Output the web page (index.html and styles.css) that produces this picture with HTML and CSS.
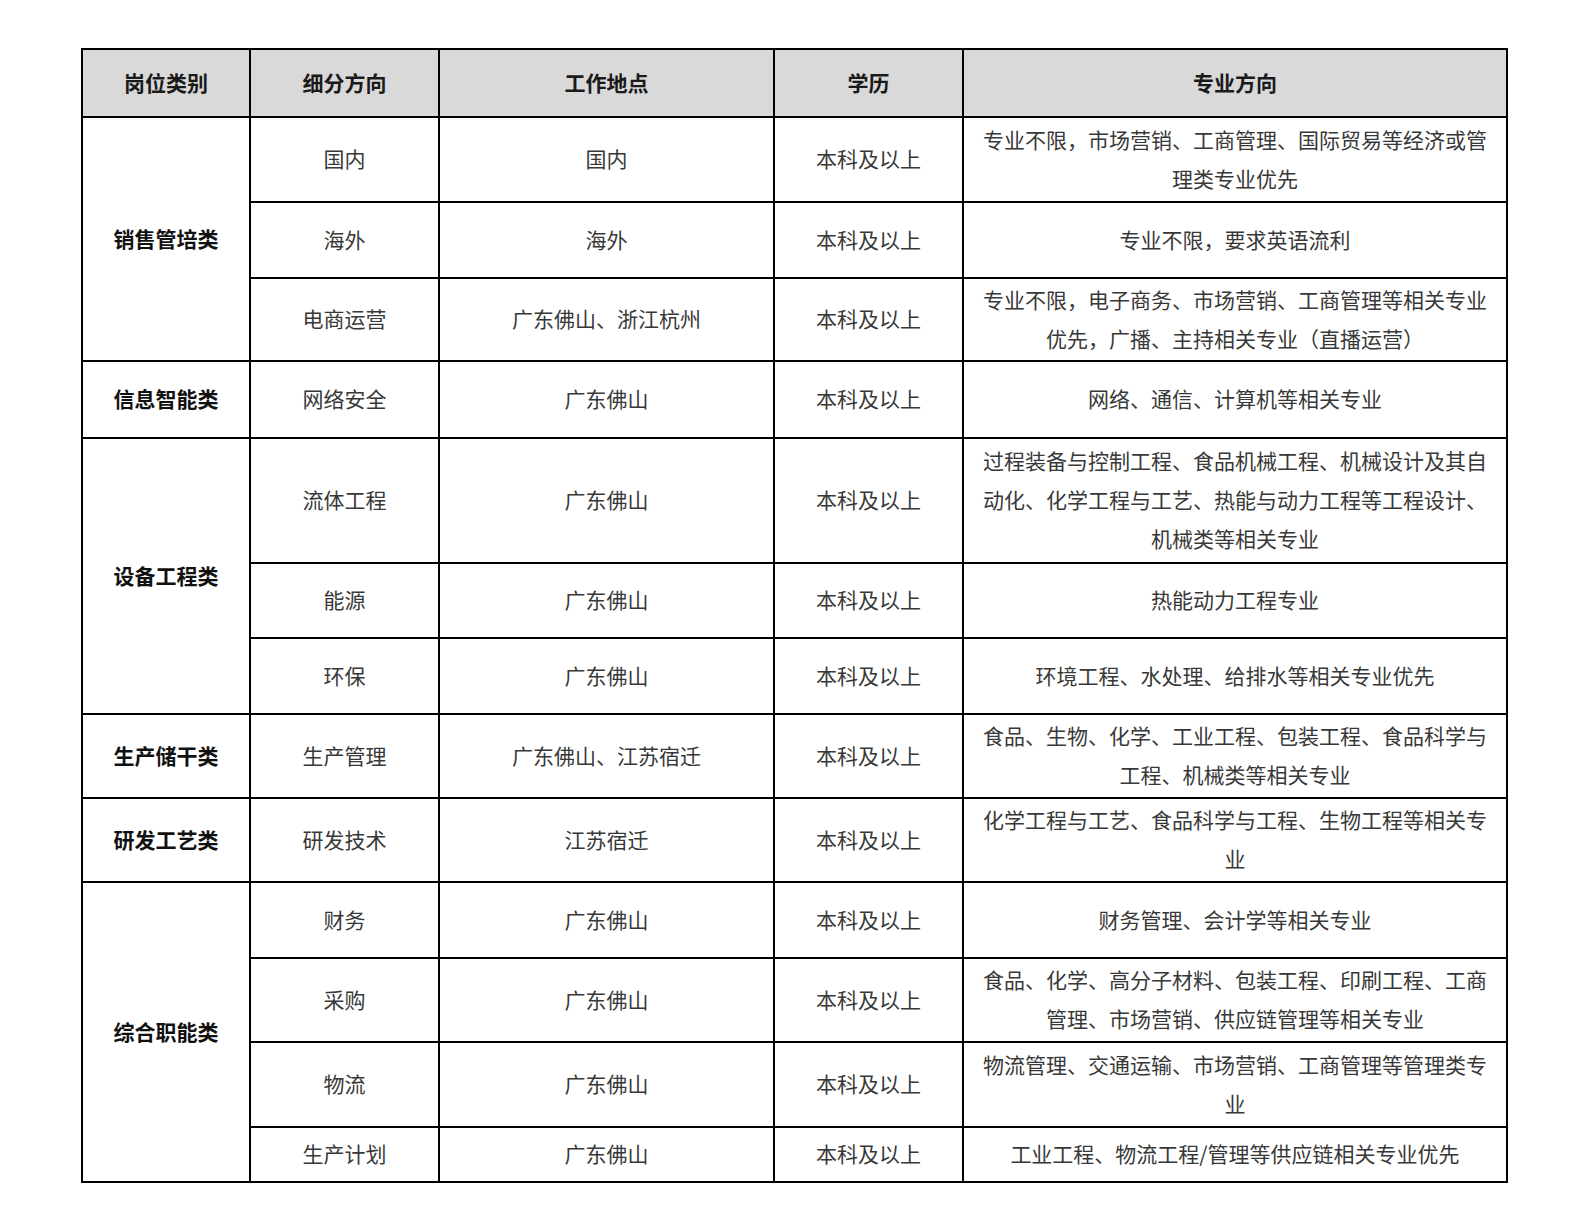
FILE: index.html
```html
<!DOCTYPE html>
<html lang="zh-CN">
<head>
<meta charset="utf-8">
<title>岗位需求</title>
<link rel="stylesheet" href="styles.css">
</head>
<body>
<table class="jobs">
  <colgroup>
    <col class="c1"><col class="c2"><col class="c3"><col class="c4"><col class="c5">
  </colgroup>
  <thead>
    <tr class="h68">
      <th>岗位类别</th><th>细分方向</th><th>工作地点</th><th>学历</th><th>专业方向</th>
    </tr>
  </thead>
  <tbody>
    <tr class="h85">
      <td class="cat" rowspan="3">销售管培类</td>
      <td>国内</td><td>国内</td><td>本科及以上</td>
      <td>专业不限，市场营销、工商管理、国际贸易等经济或管<br>理类专业优先</td>
    </tr>
    <tr class="h76">
      <td>海外</td><td>海外</td><td>本科及以上</td>
      <td>专业不限，要求英语流利</td>
    </tr>
    <tr class="h83">
      <td>电商运营</td><td>广东佛山、浙江杭州</td><td>本科及以上</td>
      <td>专业不限，电子商务、市场营销、工商管理等相关专业<br>优先，广播、主持相关专业（直播运营）</td>
    </tr>
    <tr class="h77">
      <td class="cat">信息智能类</td>
      <td>网络安全</td><td>广东佛山</td><td>本科及以上</td>
      <td>网络、通信、计算机等相关专业</td>
    </tr>
    <tr class="h125">
      <td class="cat" rowspan="3">设备工程类</td>
      <td>流体工程</td><td>广东佛山</td><td>本科及以上</td>
      <td>过程装备与控制工程、食品机械工程、机械设计及其自<br>动化、化学工程与工艺、热能与动力工程等工程设计、<br>机械类等相关专业</td>
    </tr>
    <tr class="h75">
      <td>能源</td><td>广东佛山</td><td>本科及以上</td>
      <td>热能动力工程专业</td>
    </tr>
    <tr class="h76">
      <td>环保</td><td>广东佛山</td><td>本科及以上</td>
      <td>环境工程、水处理、给排水等相关专业优先</td>
    </tr>
    <tr class="h84">
      <td class="cat">生产储干类</td>
      <td>生产管理</td><td>广东佛山、江苏宿迁</td><td>本科及以上</td>
      <td>食品、生物、化学、工业工程、包装工程、食品科学与<br>工程、机械类等相关专业</td>
    </tr>
    <tr class="h84">
      <td class="cat">研发工艺类</td>
      <td>研发技术</td><td>江苏宿迁</td><td>本科及以上</td>
      <td>化学工程与工艺、食品科学与工程、生物工程等相关专<br>业</td>
    </tr>
    <tr class="h76">
      <td class="cat" rowspan="4">综合职能类</td>
      <td>财务</td><td>广东佛山</td><td>本科及以上</td>
      <td>财务管理、会计学等相关专业</td>
    </tr>
    <tr class="h84">
      <td>采购</td><td>广东佛山</td><td>本科及以上</td>
      <td>食品、化学、高分子材料、包装工程、印刷工程、工商<br>管理、市场营销、供应链管理等相关专业</td>
    </tr>
    <tr class="h85">
      <td>物流</td><td>广东佛山</td><td>本科及以上</td>
      <td>物流管理、交通运输、市场营销、工商管理等管理类专<br>业</td>
    </tr>
    <tr class="h55">
      <td>生产计划</td><td>广东佛山</td><td>本科及以上</td>
      <td>工业工程、物流工程/管理等供应链相关专业优先</td>
    </tr>
  </tbody>
</table>
</body>
</html>
```

FILE: styles.css
```css
html, body {
  margin: 0;
  padding: 0;
  background: #ffffff;
}

body {
  font-family: "Noto Sans CJK SC", "Noto Sans", sans-serif;
  color: #383838;
}

.jobs {
  margin: 48px 0 0 81px;
  width: 1425px;
  table-layout: fixed;
  border-collapse: collapse;
  border: 2px solid #000;
  font-size: 21px;
  line-height: 39px;
}

.c1 { width: 168px; }
.c2 { width: 189px; }
.c3 { width: 335px; }
.c4 { width: 189px; }
.c5 { width: 544px; }

.jobs th,
.jobs td {
  border: 2px solid #000;
  padding: 0 2px 2px;
  text-align: center;
  vertical-align: middle;
  white-space: nowrap;
  overflow: hidden;
}

.jobs th {
  background: #d9d9d9;
  font-weight: 700;
  color: #1a1a1a;
}

.jobs td.cat {
  font-weight: 700;
  color: #111111;
}

.h55 { height: 55px; }
.h68 { height: 68px; }
.h75 { height: 75px; }
.h76 { height: 76px; }
.h77 { height: 77px; }
.h83 { height: 83px; }
.h84 { height: 84px; }
.h85 { height: 85px; }
.h125 { height: 125px; }
```
